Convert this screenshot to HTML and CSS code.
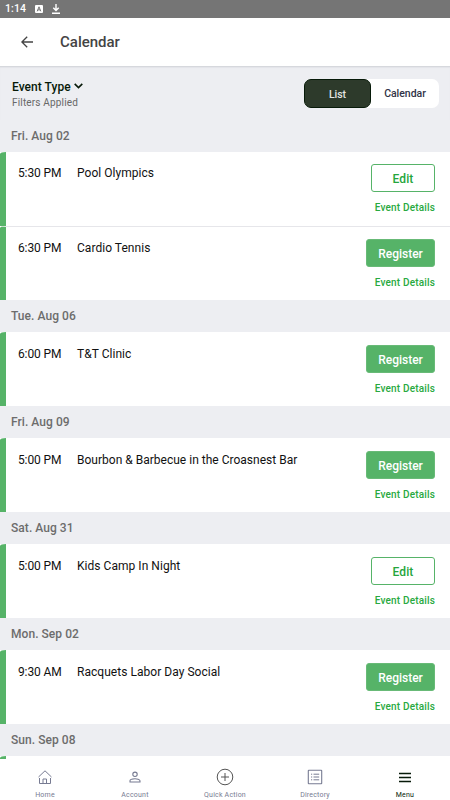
FILE: index.html
```html
<!DOCTYPE html>
<html lang="en">
<head>
<meta charset="utf-8">
<title>Calendar</title>
<link rel="stylesheet" href="styles.css">
</head>
<body>
<div class="app">
  <div class="status">
    <span class="clock">1:14</span>
    <svg class="badge" width="8" height="8" viewBox="0 0 8 8"><rect width="8" height="8" rx="1" fill="#fff"/><path d="M2.2 6.3L4 1.8 5.8 6.3M2.9 4.9h2.2" fill="none" stroke="#666" stroke-width=".9"/></svg>
    <svg width="8" height="10" viewBox="0 0 8 10"><path d="M4 0v6M1.3 3.8L4 6.6 6.7 3.8M0 9.3h8" fill="none" stroke="#fff" stroke-width="1.4"/></svg>
  </div>
  <header class="header">
    <svg width="12" height="12" viewBox="0 0 12 12"><path d="M12 6H1M6.2 .7L.9 6l5.3 5.3" fill="none" stroke="#444" stroke-width="1.3"/></svg>
    <h1>Calendar</h1>
  </header>
  <div class="filters">
    <div>
      <div class="type">Event Type <svg width="9" height="6" viewBox="0 0 9 6"><path d="M.7 .9L4.5 4.6 8.3 .9" fill="none" stroke="#071a09" stroke-width="1.6"/></svg></div>
      <div class="applied">Filters Applied</div>
    </div>
    <div class="toggle"><span class="tab active">List</span><span class="tab">Calendar</span></div>
  </div>
  <main class="list">
    <h2>Fri. Aug 02</h2>
    <div class="event"><span class="time">5:30 PM</span><span class="name">Pool Olympics</span><div class="actions"><span class="btn edit">Edit</span><span class="details">Event Details</span></div></div>
    <div class="event next"><span class="time">6:30 PM</span><span class="name">Cardio Tennis</span><div class="actions"><span class="btn">Register</span><span class="details">Event Details</span></div></div>
    <h2>Tue. Aug 06</h2>
    <div class="event"><span class="time">6:00 PM</span><span class="name">T&amp;T Clinic</span><div class="actions"><span class="btn">Register</span><span class="details">Event Details</span></div></div>
    <h2>Fri. Aug 09</h2>
    <div class="event"><span class="time">5:00 PM</span><span class="name long">Bourbon &amp; Barbecue in the Croasnest Bar</span><div class="actions"><span class="btn">Register</span><span class="details">Event Details</span></div></div>
    <h2>Sat. Aug 31</h2>
    <div class="event"><span class="time">5:00 PM</span><span class="name">Kids Camp In Night</span><div class="actions"><span class="btn edit">Edit</span><span class="details">Event Details</span></div></div>
    <h2>Mon. Sep 02</h2>
    <div class="event"><span class="time">9:30 AM</span><span class="name">Racquets Labor Day Social</span><div class="actions"><span class="btn">Register</span><span class="details">Event Details</span></div></div>
    <h2>Sun. Sep 08</h2>
    <div class="event"></div>
  </main>
  <nav class="nav">
    <div class="item"><svg width="18" height="18" viewBox="0 0 18 18"><path d="M2.500 9L9 2.800 15.500 9M3.500 10v5.500h11V10M7 15.500v-4.500h3.500v4.500" fill="none" stroke="#777b92" stroke-width="1"/></svg><span>Home</span></div>
    <div class="item"><svg width="18" height="18" viewBox="0 0 18 18"><circle cx="9" cy="6.300" r="2.200" fill="none" stroke="#777b92" stroke-width="1.100"/><path d="M4 14v-1.200c0-1.500 3.300-2.100 5-2.100s5 .6 5 2.100V14z" fill="none" stroke="#777b92" stroke-width="1.100"/></svg><span>Account</span></div>
    <div class="item"><svg width="18" height="18" viewBox="0 0 18 18"><circle cx="9" cy="9" r="7.800" fill="none" stroke="#555" stroke-width="1"/><path d="M9 5v8M5 9h8" stroke="#555" stroke-width="1"/></svg><span>Quick Action</span></div>
    <div class="item"><svg width="18" height="18" viewBox="0 0 18 18"><rect x="2.300" y="2.300" width="13.400" height="13.400" rx=".5" fill="none" stroke="#777b92" stroke-width="1.100"/><path d="M5 6.200h1.200M5 9h1.200M5 11.800h1.200M7.500 6.200h5.700M7.500 9h5.700M7.500 11.800h5.700" stroke="#777b92" stroke-width="1"/></svg><span>Directory</span></div>
    <div class="item current"><svg width="18" height="18" viewBox="0 0 18 18"><path d="M3 5.500h12M3 9.500h12M3 13.500h12" stroke="#071a09" stroke-width="1.300"/></svg><span>Menu</span></div>
  </nav>
</div>
</body>
</html>
```
FILE: styles.css
```css
* { box-sizing: border-box; }
body { margin: 0; font-family: Roboto, sans-serif; background: #fff; }
svg { display: block; flex: none; }
.app { height: 800px; display: flex; flex-direction: column; overflow: hidden; }
.status { flex: none; height: 18px; background: #757575; color: #fff; display: flex; align-items: center; padding-left: 5px; }
.clock { font-size: 10.5px; line-height: 18px; width: 30px; font-weight: 500; letter-spacing: .1px; }
.badge { margin-right: 9px; }
.header { flex: none; height: 48px; display: flex; align-items: center; padding-left: 21px; gap: 27px; }
h1 { margin: 0; font-size: 15px; font-weight: 500; letter-spacing: 0; color: #444; }
.filters { flex: none; height: 54px; background: #edeef2; border-top: 1px solid #d6d8dd; box-shadow: inset 0 1px 1px #e3e4e9; display: flex; justify-content: space-between; align-items: flex-start; padding: 12px 11px 0 12px; }
.type { display: flex; align-items: center; gap: 3px; font-size: 12px; line-height: 16px; font-weight: 500; letter-spacing: .05px; color: #071a09; }
.type svg { margin-top: -2px; }
.applied { font-size: 10px; line-height: 15px; letter-spacing: .17px; color: #686868; }
.toggle { width: 135px; height: 29px; display: flex; background: #fff; border-radius: 7px; }
.tab { flex: none; width: 68px; text-align: center; font-size: 10.5px; line-height: 30px; font-weight: 500; letter-spacing: -.04px; color: #303346; }
.active { width: 67px; background: #2d3a2b; border: 1px solid #071a09; border-radius: 7px; line-height: 29px; color: #e4e6e4; }
.list { flex: 1; overflow: hidden; }
h2 { margin: 0; height: 32px; padding-left: 11px; background: #edeef2; font-size: 12px; line-height: 33px; font-weight: 500; letter-spacing: .05px; color: #6c6c6c; }
h2:first-child { line-height: 32px; }
.event { height: 74px; display: flex; border-left: 6px solid #56b368; border-top-left-radius: 6px 2px; padding: 13px 15px 0 12px; font-size: 12px; line-height: 18px; color: #111; }
.event:nth-child(2) { padding-top: 12px; }
.next { border-top: 1px solid #e6e6ea; padding-top: 12px; }
.time { width: 59px; letter-spacing: -.13px; }
.name { letter-spacing: .04px; }
.name.long { letter-spacing: .01px; }
.actions { margin-left: auto; display: flex; flex-direction: column; align-items: flex-end; }
.btn { width: 69px; height: 28px; border: 1px solid #68ba77; border-radius: 3px; background: #56b368; color: #fff; text-align: center; font-size: 12px; line-height: 28px; font-weight: 500; letter-spacing: -.02px; }
.edit { width: 64px; background: #fff; border-color: #56b368; color: #25a53c; letter-spacing: .1px; }
.details { margin-top: 9px; font-size: 10px; line-height: 14px; font-weight: 500; letter-spacing: .17px; color: #28a940; }
.nav { flex: none; height: 41px; display: flex; background: #fff; padding-top: 9px; }
.item { flex: 1; display: flex; flex-direction: column; align-items: center; font-size: 7px; line-height: 18px; letter-spacing: .2px; color: #777b92; }
.current { color: #071a09; }
```
